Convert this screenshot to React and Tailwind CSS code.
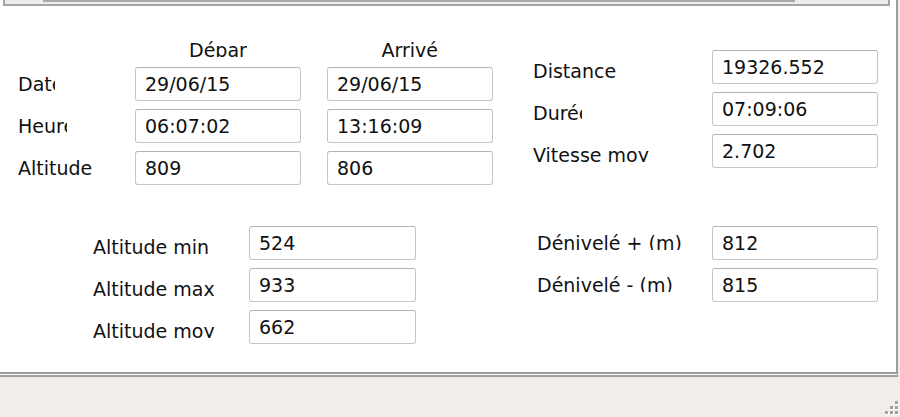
import React from 'react';

const top = [
  { label: 'Date', clip: 'w-[37px]', dep: '29/06/15', arr: '29/06/15' },
  { label: 'Heure', clip: 'w-[49px]', dep: '06:07:02', arr: '13:16:09' },
  { label: 'Altitude', clip: '', dep: '809', arr: '806' },
];

const summary = [
  { label: 'Distance', clip: '', value: '19326.552' },
  { label: 'Durée', clip: 'w-[49px]', value: '07:09:06' },
  { label: 'Vitesse moy', clip: '', value: '2.702' },
];

const altitudes = [
  { label: 'Altitude min', value: '524' },
  { label: 'Altitude max', value: '933' },
  { label: 'Altitude moy', value: '662' },
];

const denivele = [
  { label: 'Dénivelé + (m)', value: '812' },
  { label: 'Dénivelé - (m)', value: '815' },
];

// Label clipped like a fixed-size WinForms label
function Label({ text, clip = '', offset = 'mt-[7px]' }) {
  return (
    <div className={`${offset} h-[17px] leading-[20px] overflow-hidden whitespace-nowrap ${clip}`}>
      {text}
    </div>
  );
}

function Field({ value, width = 'w-[166px]' }) {
  return (
    <div className={`${width} h-[34px] flex items-center pl-[9px] bg-white border border-[#c6c6c6] border-t-[#b4b4b4] rounded-[3px] text-[#111] whitespace-nowrap`}>
      {value}
    </div>
  );
}

function Grip() {
  const dots = [
    [12, 0],
    [7, 5], [12, 5],
    [2, 10], [7, 10], [12, 10],
  ];
  return (
    <svg className="absolute right-0 bottom-0" width="17" height="16" viewBox="0 0 17 16">
      {dots.map(([x, y]) => (
        <g key={`${x}-${y}`}>
          <rect x={x + 1} y={y + 1} width="3" height="3" fill="#ffffff" />
          <rect x={x} y={y} width="3" height="3" fill="#a3a3a3" />
        </g>
      ))}
    </svg>
  );
}

export default function App() {
  return (
    <div className="relative w-[900px] h-[417px] overflow-hidden bg-[#f0edeb] font-['DejaVu_Sans',sans-serif] text-[19px] text-[#111]">
      <div className="w-[898px] h-[377px] bg-white border-r-2 border-b-[5px] border-double border-[#9d9d9d]">
        {/* cut-off scroll strip at the top */}
        <div className="ml-[3px] w-[887px] h-[6px] bg-[#ececec] border-x-2 border-b-2 border-[#a4a4a4]">
          <div className="ml-[38px] w-[752px] h-[2px] bg-[#a9a9a9]" />
        </div>

        <div className="flex items-start pl-[18px]">
          {/* départ / arrivée */}
          <div className="pt-[34px]">
            <div className="flex">
              <div className="w-[117px]" />
              <div className="w-[166px]">
                <Label text="Départ" clip="w-[58px] mx-auto" offset="" />
              </div>
              <div className="w-[166px] ml-[26px]">
                <Label text="Arrivée" clip="w-[57px] mx-auto" offset="" />
              </div>
            </div>
            <div className="mt-[10px] flex flex-col gap-[8px]">
              {top.map((r) => (
                <div key={r.label} className="flex items-start">
                  <div className="w-[117px]">
                    <Label text={r.label} clip={r.clip} />
                  </div>
                  <Field value={r.dep} />
                  <div className="ml-[26px]">
                    <Field value={r.arr} />
                  </div>
                </div>
              ))}
            </div>
          </div>

          {/* totals */}
          <div className="ml-[40px] pt-[44px] flex flex-col gap-[8px]">
            {summary.map((r) => (
              <div key={r.label} className="flex items-start">
                <div className="w-[179px]">
                  <Label text={r.label} clip={r.clip} offset="mt-[11px]" />
                </div>
                <Field value={r.value} />
              </div>
            ))}
          </div>
        </div>

        <div className="mt-[41px] flex items-start pl-[93px]">
          <div className="flex flex-col gap-[8px]">
            {altitudes.map((r) => (
              <div key={r.label} className="flex items-start">
                <div className="w-[156px]">
                  <Label text={r.label} offset="mt-[11px]" />
                </div>
                <Field value={r.value} width="w-[167px]" />
              </div>
            ))}
          </div>
          <div className="ml-[121px] flex flex-col gap-[8px]">
            {denivele.map((r) => (
              <div key={r.label} className="flex items-start">
                <div className="w-[175px]">
                  <Label text={r.label} />
                </div>
                <Field value={r.value} />
              </div>
            ))}
          </div>
        </div>
      </div>
      <Grip />
    </div>
  );
}
